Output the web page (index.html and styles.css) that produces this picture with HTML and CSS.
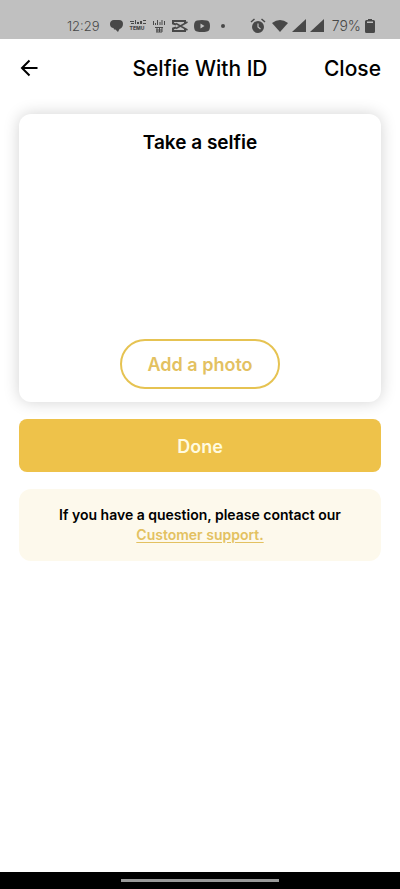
FILE: index.html
```html
<!DOCTYPE html>
<html lang="en">
<head>
<meta charset="utf-8">
<meta name="viewport" content="width=device-width, initial-scale=1">
<title>Selfie With ID</title>
<link rel="stylesheet" href="styles.css">
</head>
<body>
<div class="status">
  <div class="status-group">
    <span class="status-text time">12:29</span>
    <svg class="gap-wide" width="14" height="14" viewBox="0 0 14 14"><path d="M4 1h5a4 4 0 0 1 4 4C13 8 11 9.500 9.500 10L8 13 5.500 10.500H4L3.500 9A4 4 0 0 1 0 5.500 4 4 0 0 1 4 1z"/></svg>
    <div class="temu"><svg width="16" height="5" viewBox="0 0 16 5"><path d="M0 1h4v1H0zM1 3h3v1H1zM5 0h1v4H5zM7 2h2v2H7zM10 1h2v3h-2zM13 0h3v1h-3zM13 3h3v1h-3z"/></svg><span>TEMU</span></div>
    <svg width="14" height="14" viewBox="0 0 14 14"><path d="M1.500 2v4M3.500 4v2M5.500 1v5M8 3v3M10 1v5M12.500 2v4M3 8.500h8M4 11h6M4 13h6M5 8v5M7.500 8v5M10 8v5" fill="none" stroke="#484848"/></svg>
    <svg width="16" height="14" viewBox="0 0 16 14"><path d="M15.500 3L4 9.500M15.500 11L4 4.500" fill="none" stroke="#484848" stroke-width="1.500"/><path d="M13 4.500V2H1v2.500l3 1M13 9.500V12H1V9.500l3-1" fill="none" stroke="#484848" stroke-width="2"/></svg>
    <svg width="16" height="14" viewBox="0 0 16 14"><path fill-rule="evenodd" d="M3 1.500Q8 .5 13 1.500 16 2 16 7t-3 5.500Q8 13.500 3 12.500 0 12 0 7t3-5.500zM6.500 4.500v5l4-2.500z"/></svg>
    <svg width="16" height="14" viewBox="0 0 16 14"><circle cx="7" cy="7" r="2"/></svg>
  </div>
  <div class="status-group right">
    <svg width="16" height="16" viewBox="0 0 16 16"><circle cx="8" cy="9" r="6"/><path d="M1 4l3.500-3M15 4l-3.500-3" stroke="#484848" stroke-width="1.500"/><path d="M8 5.500V9l2.500 2" fill="none" stroke="#c0c0c0" stroke-width="1.200"/></svg>
    <svg class="wifi" width="16" height="14" viewBox="0 0 16 14"><path d="M0 4Q8-2 16 4L8 13z"/></svg>
    <svg width="14" height="14" viewBox="0 0 14 14"><path d="M14 0v13H0z"/></svg>
    <svg width="14" height="14" viewBox="0 0 14 14"><path d="M14 0v13H0z"/></svg>
    <span class="status-text percent">79%</span>
    <svg width="10" height="14" viewBox="0 0 10 14"><path fill-rule="evenodd" d="M3 0h4v1h1.500Q10 1 10 2.500v10q0 1.500-1.500 1.500h-7Q0 14 0 12.500v-10Q0 1 1.500 1H3zM2 2.500V4h6V2.500z"/></svg>
  </div>
</div>
<header class="header">
  <button class="back" type="button" aria-label="Back"><svg width="20" height="20" viewBox="0 0 20 20"><path d="M18.500 9H3M10.500 1.500L3 9l7.500 7.500" fill="none" stroke="#000" stroke-width="2"/></svg></button>
  <h1>Selfie With ID</h1>
  <button class="close" type="button">Close</button>
</header>
<main class="content">
  <section class="card">
    <h2>Take a selfie</h2>
    <button class="add" type="button">Add a photo</button>
  </section>
  <button class="done" type="button">Done</button>
  <p class="note">If you have a question, please contact our<br><a href="#">Customer support.</a></p>
</main>
<div class="navbar"><div class="handle"></div></div>
</body>
</html>
```

FILE: styles.css
```css
* { box-sizing: border-box; }
body {
  margin: 0;
  min-height: 100vh;
  display: flex;
  flex-direction: column;
  background: #fff;
  color: #000;
  font-family: Inter, "Liberation Sans", sans-serif;
  font-weight: 600;
}
button {
  font: inherit;
  color: inherit;
  background: none;
  border: 0;
  padding: 0;
  cursor: pointer;
}
svg { display: block; flex: none; fill: #484848; }
.status {
  height: 39px;
  padding: 12px 25px 0 67px;
  display: flex;
  justify-content: space-between;
  align-items: center;
  background: #c0c0c0;
  color: #484848;
}
.status-group { display: flex; align-items: center; gap: 6px; }
.status-group.right { gap: 4px; }
.status-text { font-size: 14px; line-height: 16px; font-weight: 300; }
.time { font-size: 13px; }
.gap-wide { margin-left: 4px; }
.percent { margin-left: 4px; }
.wifi { margin-left: 2px; }
.temu { width: 16px; }
.temu span { display: block; font-size: 5px; line-height: 6px; font-weight: 800; }
.header {
  height: 60px;
  padding: 0 19px;
  display: grid;
  grid-template-columns: 1fr auto 1fr;
  align-items: center;
}
.back { justify-self: start; }
h1, h2, p { margin: 0; }
h1, .close { font-size: 21px; line-height: 28px; font-weight: 500; }
.close { justify-self: end; }
.content {
  flex: 1;
  padding: 15px 19px;
  display: flex;
  flex-direction: column;
  gap: 17px;
}
.card {
  min-height: 288px;
  padding: 17px 16px 13px;
  display: flex;
  flex-direction: column;
  align-items: center;
  justify-content: space-between;
  border-radius: 12px;
  box-shadow: 0 0 16px rgba(0, 0, 0, 0.18);
}
h2 { font-size: 19px; line-height: 24px; font-weight: 600; }
.add {
  width: 160px;
  height: 50px;
  border: 2px solid #e6c352;
  border-radius: 25px;
  color: #e3c161;
  font-size: 18px;
}
.done {
  height: 53px;
  padding-top: 2px;
  border-radius: 8px;
  background: #eec24a;
  color: #fffbe0;
  font-size: 18px;
}
.note {
  padding: 16px;
  border-radius: 12px;
  background: #fdf9ec;
  font-size: 14px;
  line-height: 20px;
  text-align: center;
}
.note a { color: #e3c161; text-underline-offset: 2px; }
.navbar {
  height: 17px;
  display: flex;
  justify-content: center;
  align-items: center;
  background: #000;
}
.handle { width: 158px; height: 3px; background: #999; }
```
